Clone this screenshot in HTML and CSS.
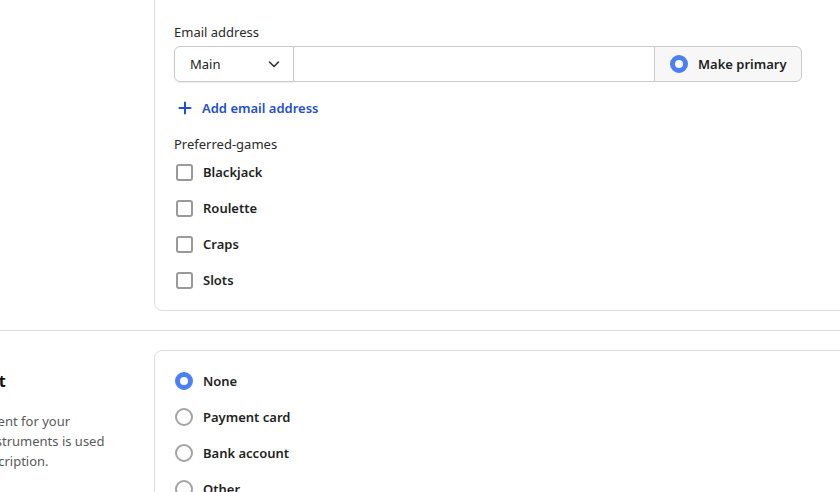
FILE: index.html
```html
<!DOCTYPE html>
<html lang="en">
<head>
<meta charset="utf-8">
<title>Customer form</title>
<link rel="stylesheet" href="styles.css">
</head>
<body>
<div class="page">
  <section class="section first">
    <div class="side"></div>
    <div class="card">
      <div class="field-label">Email address</div>
      <div class="input-group">
        <div class="select">
          <span>Main</span>
          <svg class="chev" width="14" height="14" viewBox="0 0 14 14"><path d="M2.5 5 L7 9.5 L11.5 5" fill="none" stroke="#333" stroke-width="1.6" stroke-linecap="round" stroke-linejoin="round"/></svg>
        </div>
        <div class="text-input"></div>
        <div class="primary-btn">
          <span class="radio checked"></span>
          <span>Make primary</span>
        </div>
      </div>
      <a class="add-link" href="#">
        <svg width="14" height="14" viewBox="0 0 14 14"><path d="M7 1.5 V12.5 M1.5 7 H12.5" stroke="currentColor" stroke-width="2" stroke-linecap="round"/></svg>
        <span>Add email address</span>
      </a>
      <div class="field-label games-label">Preferred-games</div>
      <div class="options">
        <label class="option"><span class="checkbox"></span><span>Blackjack</span></label>
        <label class="option"><span class="checkbox"></span><span>Roulette</span></label>
        <label class="option"><span class="checkbox"></span><span>Craps</span></label>
        <label class="option"><span class="checkbox"></span><span>Slots</span></label>
      </div>
    </div>
  </section>
  <hr class="divider">
  <section class="section second">
    <div class="side">
      <h2 class="side-title">Default payment</h2>
      <p class="side-desc">
        <span class="line">Set the default payment for your</span>
        <span class="line">user. One of these instruments is used</span>
        <span class="line">to pay for every subscription.</span>
      </p>
    </div>
    <div class="card">
      <div class="options radio-list">
        <label class="option"><span class="radio checked"></span><span>None</span></label>
        <label class="option"><span class="radio"></span><span>Payment card</span></label>
        <label class="option"><span class="radio"></span><span>Bank account</span></label>
        <label class="option"><span class="radio"></span><span>Other</span></label>
      </div>
    </div>
  </section>
</div>
</body>
</html>
```

FILE: styles.css
```css
* { box-sizing: border-box; }
html, body { margin: 0; padding: 0; background: #fff; overflow: hidden; }
body {
  font-family: "Noto Sans", "Open Sans", sans-serif;
  font-size: 13px;
  color: #1f1f1f;
  width: 840px;
  height: 492px;
}
.page {
  margin-top: -11px;
  margin-left: -300px;
  width: 1300px;
}
.section {
  display: grid;
  grid-template-columns: 424px 1fr;
  gap: 30px;
}
.card {
  border: 1px solid #dedede;
  border-radius: 8px;
  padding: 12px 0 12px 19px;
  background: #fff;
}
.first .card {
  padding-top: 32px;
  border-top-left-radius: 0;
}
.field-label {
  line-height: 20px;
  color: #2a2a2a;
}
.input-group {
  margin-top: 4px;
  display: flex;
  height: 36px;
  width: 628px;
}
.select {
  width: 120px;
  display: flex;
  align-items: center;
  justify-content: space-between;
  padding: 0 12px 0 15px;
  border: 1px solid #cacaca;
  border-radius: 6px 0 0 6px;
  box-shadow: 0 1px 2px rgba(0,0,0,0.08);
  color: #222;
}
.text-input {
  flex: 1;
  border-top: 1px solid #cacaca;
  border-bottom: 1px solid #cacaca;
}
.primary-btn {
  width: 148px;
  display: flex;
  align-items: center;
  gap: 10px;
  padding-left: 15px;
  border: 1px solid #cacaca;
  border-radius: 0 6px 6px 0;
  background: #f7f7f7;
  font-weight: 600;
  color: #1f1f1f;
}
.add-link {
  margin-top: 16px;
  display: flex;
  align-items: center;
  gap: 10px;
  padding-left: 4px;
  height: 20px;
  color: #1f4fd1;
  font-weight: 600;
  text-decoration: none;
}
.games-label { margin-top: 16px; }
.options { display: flex; flex-direction: column; }
.option {
  height: 36px;
  display: flex;
  align-items: center;
  gap: 10px;
  padding-left: 2px;
  font-weight: 600;
  color: #1f1f1f;
}
.radio-list .option {
  padding-left: 1px;
  gap: 10px;
}
.checkbox {
  width: 17px;
  height: 17px;
  border: 2px solid #9a9a9a;
  border-radius: 3px;
  background: #fff;
  flex: none;
}
.radio {
  width: 18px;
  height: 18px;
  border: 2px solid #a3a3a3;
  border-radius: 50%;
  background: #fff;
  flex: none;
}
.radio.checked {
  border: 5px solid #4a7ff5;
}
.divider {
  border: 0;
  border-top: 1px solid #dcdcdc;
  margin: 19px 0 19px 0;
  height: 0;
}
.side { padding-top: 19px; }
.side-title {
  margin: 0 0 0 171px;
  font-size: 16px;
  line-height: 24px;
  font-weight: 700;
  color: #111;
}
.side-desc {
  margin: 18px 0 0 171px;
  line-height: 20px;
  color: #5a5a5a;
}
.line { display: block; white-space: nowrap; }
```
